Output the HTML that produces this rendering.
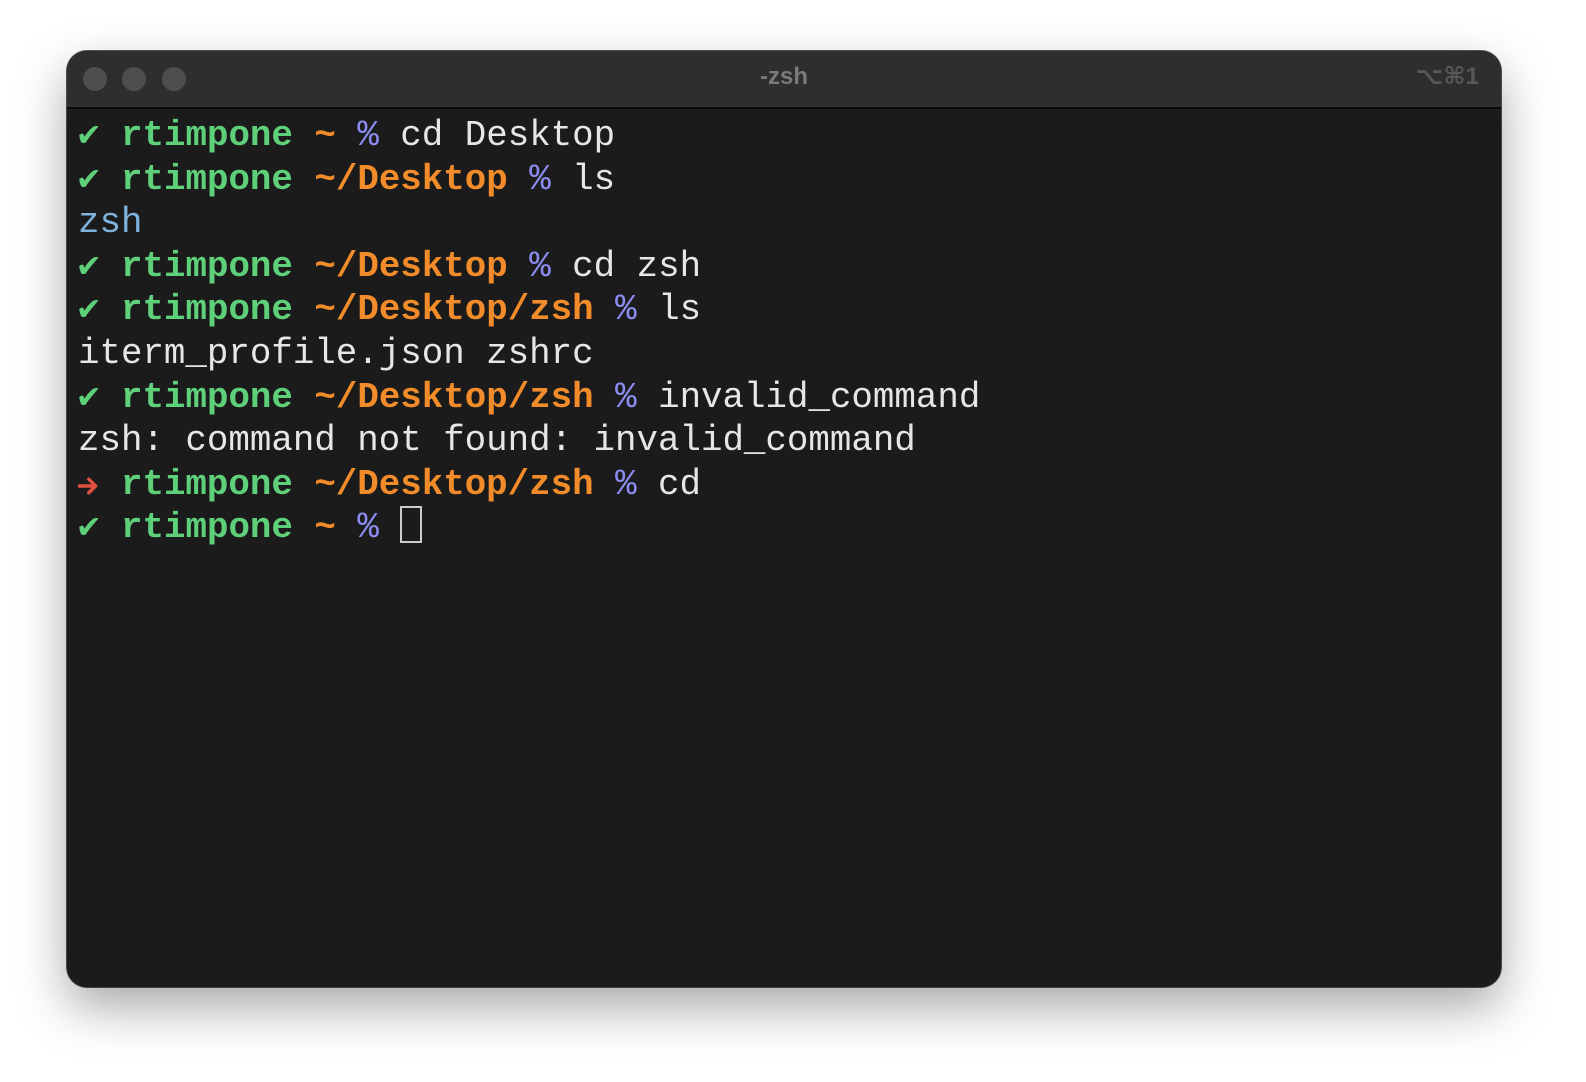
<!DOCTYPE html>
<html><head><meta charset="utf-8"><style>
html,body{margin:0;padding:0;background:#fff;width:1586px;height:1082px;overflow:hidden}
.win{position:absolute;left:67px;top:51px;width:1434px;height:936px;border-radius:20px;background:#1b1b1b;overflow:hidden;box-shadow:0 20px 50px rgba(0,0,0,0.35),0 0 0 1px #555;}
.tb{position:absolute;left:0;top:0;width:100%;height:56px;background:#2e2e30;border-bottom:2px solid #0a0a0a}
.dot{position:absolute;top:16px;width:24px;height:24px;border-radius:50%;background:#4e4e50}
.title{position:absolute;left:0;width:100%;top:12px;text-align:center;color:#7a7a7c;font:bold 24px "Liberation Sans",sans-serif}
.sc{position:absolute;right:22px;top:11px;color:#58585a;font:bold 24px "Liberation Sans","DejaVu Sans",sans-serif}
.term{position:absolute;left:11px;top:63px;font:35.8px/43.6px "Liberation Mono","DejaVu Sans Mono",monospace;color:#e6e6e6;white-space:pre}
.g{color:#5fd07a;font-weight:bold}.o{color:#f28c2b;font-weight:bold}.p{color:#8a8cf0}.b{color:#7fb2dc}
.cur{display:inline-block;width:18px;height:33px;border:2px solid #ccc;vertical-align:-6px}
.ar{display:inline-block;width:21.5px;height:20px;vertical-align:-2px}
</style></head><body>
<div class="win">
<div class="tb"><div class="dot" style="left:16px"></div><div class="dot" style="left:55px"></div><div class="dot" style="left:95px"></div>
<div class="title">-zsh</div><div class="sc">⌥⌘1</div></div>
<div class="term"><span class="g">✔ rtimpone</span> <span class="o">~</span> <span class="p">%</span> cd Desktop
<span class="g">✔ rtimpone</span> <span class="o">~/Desktop</span> <span class="p">%</span> ls
<span class="b">zsh</span>
<span class="g">✔ rtimpone</span> <span class="o">~/Desktop</span> <span class="p">%</span> cd zsh
<span class="g">✔ rtimpone</span> <span class="o">~/Desktop/zsh</span> <span class="p">%</span> ls
iterm_profile.json zshrc
<span class="g">✔ rtimpone</span> <span class="o">~/Desktop/zsh</span> <span class="p">%</span> invalid_command
zsh: command not found: invalid_command
<svg class="ar" viewBox="0 0 22 20"><path d="M1 10H18M11 3L18 10L11 17" stroke="#e0523f" stroke-width="3.5" fill="none" stroke-linecap="round" stroke-linejoin="round"/></svg> <span class="g">rtimpone</span> <span class="o">~/Desktop/zsh</span> <span class="p">%</span> cd
<span class="g">✔ rtimpone</span> <span class="o">~</span> <span class="p">%</span> <span class="cur"></span></div>
</div>
</body></html>
